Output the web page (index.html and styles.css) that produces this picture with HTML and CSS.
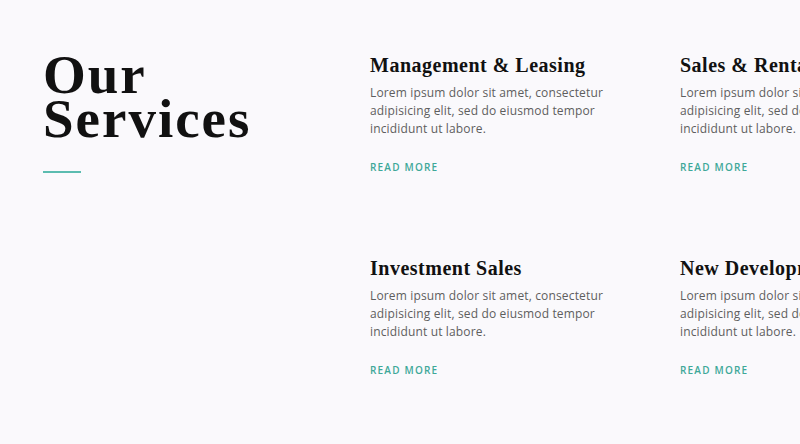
FILE: index.html
```html
<!DOCTYPE html>
<html lang="en">
<head>
    <meta charset="UTF-8">
    <meta name="viewport" content="width=device-width, initial-scale=1.0">
    <title>Our Services</title>
    <link rel="stylesheet" href="styles.css">
</head>
<body>

    <!-- Services Section -->
    <section class="services">
        <div class="services-intro">
            <h1>Our<br>Services</h1>
            <div class="divider"></div>
        </div>

        <div class="services-grid">
            <div class="service">
                <h2>Management &amp; Leasing</h2>
                <p>Lorem ipsum dolor sit amet, consectetur adipisicing elit, sed do eiusmod tempor incididunt ut labore.</p>
                <a href="#" class="read-more">Read More</a>
            </div>
            <div class="service">
                <h2>Sales &amp; Rentals</h2>
                <p>Lorem ipsum dolor sit amet, consectetur adipisicing elit, sed do eiusmod tempor incididunt ut labore.</p>
                <a href="#" class="read-more">Read More</a>
            </div>
            <div class="service">
                <h2>Investment Sales</h2>
                <p>Lorem ipsum dolor sit amet, consectetur adipisicing elit, sed do eiusmod tempor incididunt ut labore.</p>
                <a href="#" class="read-more">Read More</a>
            </div>
            <div class="service">
                <h2>New Developments</h2>
                <p>Lorem ipsum dolor sit amet, consectetur adipisicing elit, sed do eiusmod tempor incididunt ut labore.</p>
                <a href="#" class="read-more">Read More</a>
            </div>
        </div>
    </section>

</body>
</html>
```

FILE: styles.css
```css
body {
    margin: 0;
    background-color: #faf9fc; /* Off-white page */
    font-family: 'Open Sans', sans-serif;
    overflow: hidden;
}

/* Two column section: heading on the left, cards on the right */
.services {
    display: flex;
    padding: 53px 0 0 43px;
    width: 1100px;
}

.services-intro {
    width: 327px;
    flex-shrink: 0;
}

.services-intro h1 {
    margin: 0;
    font-family: 'Liberation Serif', serif;
    font-weight: bold;
    font-size: 55px;
    line-height: 44px;
    letter-spacing: 2px;
    color: #111;
}

/* Small teal line under the heading */
.divider {
    width: 38px;
    height: 2px;
    margin-top: 30px;
    background-color: #5bbcb0;
}

.services-grid {
    display: grid;
    grid-template-columns: 310px 310px;
    row-gap: 82px;
}

.service h2 {
    margin: 0;
    font-family: 'Liberation Serif', serif;
    font-weight: bold;
    font-size: 20px;
    line-height: 24px;
    letter-spacing: 0.5px;
    color: #111;
}

.service p {
    margin: 7px 0 0;
    width: 245px;
    font-size: 12px;
    line-height: 18px;
    letter-spacing: 0.15px;
    color: #5e5e5e;
}

.read-more {
    display: block;
    margin-top: 22px;
    font-size: 10px;
    line-height: 14px;
    letter-spacing: 1.2px;
    text-transform: uppercase;
    text-decoration: none;
    font-weight: 600;
    color: #3ea899;
}
```
